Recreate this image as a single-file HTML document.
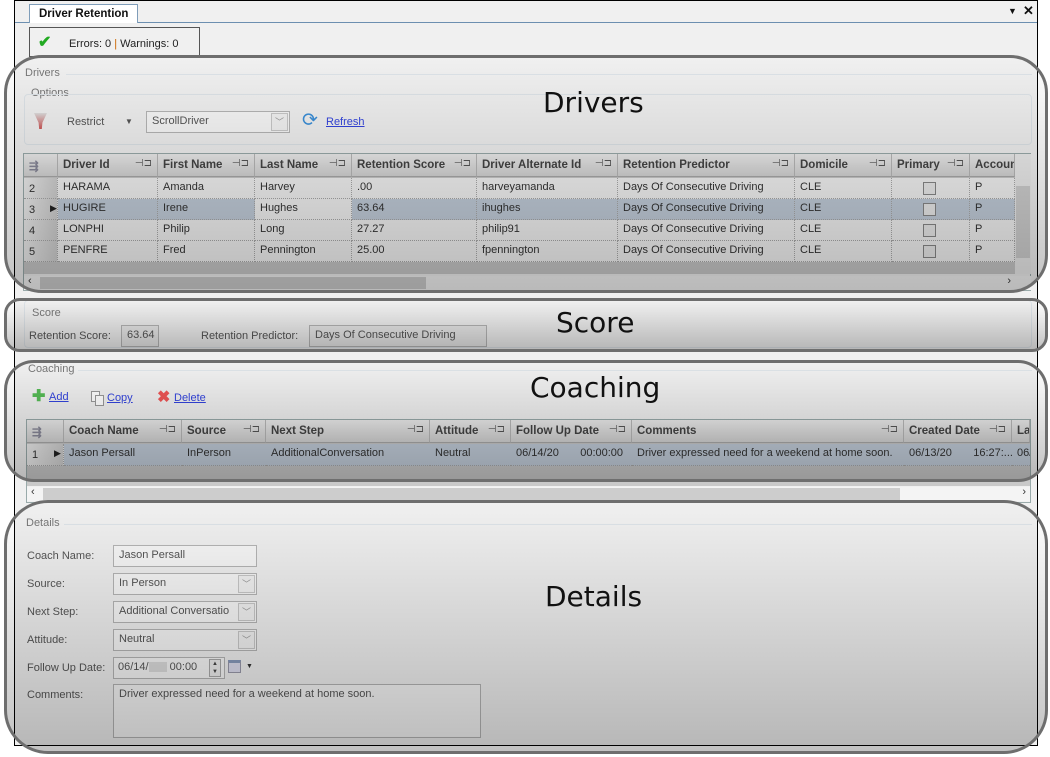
<!DOCTYPE html>
<html><head><meta charset="utf-8"><style>
*{box-sizing:border-box;margin:0;padding:0}
body{width:1050px;height:757px;background:#fff;position:relative;overflow:hidden;font-family:"Liberation Sans",Tahoma,sans-serif;font-size:11px;color:#333}
.a{position:absolute}
#win{left:14px;top:0;width:1024px;height:746px;border:1px solid #000;background:#f0f0f0}
.lbl{color:#777;font-size:11px}
.line{height:1px;background:#dde3e8}
.grid{border:1px solid #9aa;background:#c8c8c8}
.hd{position:absolute;top:0;height:23px;background:linear-gradient(#ececec,#d4d4d4);border-right:1px solid #b8b8b8;border-bottom:1px solid #aaa;font-weight:bold;color:#444;font-size:11.5px;padding:5px 0 0 5px;white-space:nowrap;overflow:hidden}
.pin{position:absolute;right:5px;top:4px;font-weight:normal;color:#555;font-size:10px}
.c{position:absolute;height:21px;padding:3px 0 0 5px;border-right:1px dotted #aaa;border-bottom:1px dotted #aaa;white-space:nowrap;overflow:hidden;color:#333}
.ov{position:absolute;border:3px solid #6e6e6e;border-radius:38px;background:linear-gradient(rgba(0,0,0,0),rgba(0,0,0,.24))}
.big{position:absolute;font-family:"DejaVu Sans",sans-serif;font-size:28px;color:#111}
.box{position:absolute;border:1px solid #b5b5b5;background:#f7f7f7;padding:3px 5px;color:#555;white-space:nowrap;overflow:hidden}
.dd{position:absolute;right:1px;top:1px;width:17px;height:18px;border:1px solid #c8c8c8;background:#f2f2f2;color:#999;font-size:9px;text-align:center;line-height:16px}
a{color:#3344dd;text-decoration:underline}
.chk{position:absolute;width:13px;height:13px;border:1px solid #888;background:#ececec}
</style></head><body>
<div id="win" class="a"></div>
<!-- tab -->
<div class="a" style="left:15px;top:22px;width:1022px;height:1px;background:#6c8fb0"></div>
<div class="a" style="left:29px;top:4px;width:109px;height:19px;border:1px solid #7f9db9;border-bottom:none;background:#fff;font-weight:bold;font-size:11.5px;color:#111;padding:3px 0 0 9px">Driver Retention</div>
<div class="a" style="left:1008px;top:6px;font-size:9px;color:#111">▼</div>
<div class="a" style="left:1023px;top:3px;font-weight:bold;font-size:13px;color:#111">✕</div>
<!-- errors -->
<div class="a" style="left:29px;top:27px;width:171px;height:30px;border:1px solid #555;background:#f0f0f0"></div>
<div class="a" style="left:38px;top:32px;color:#2a2;font-size:16px;font-weight:bold">✔</div>
<div class="a" style="left:69px;top:38px;color:#222">Errors: 0 <span style="color:#c60">|</span> Warnings: 0</div>

<!-- Drivers -->
<div class="a lbl" style="left:25px;top:67px">Drivers</div>
<div class="a line" style="left:66px;top:74px;width:966px"></div>
<div class="a lbl" style="left:31px;top:87px">Options</div>
<div class="a" style="left:24px;top:94px;width:1008px;height:51px;border:1px solid #dde3e8;border-radius:4px"></div>
<div class="a" style="left:34px;top:113px;width:13px;height:16px;background:linear-gradient(#ddd,#c55);clip-path:polygon(0 0,100% 0,65% 60%,60% 100%,40% 100%,35% 60%)"></div>
<div class="a" style="left:67px;top:116px;color:#555">Restrict</div>
<div class="a" style="left:125px;top:117px;font-size:8px;color:#555">▼</div>
<div class="box" style="left:146px;top:111px;width:144px;height:22px">ScrollDriver<div class="dd">﹀</div></div>
<div class="a" style="left:302px;top:111px;color:#3b8fd8;font-size:19px;line-height:20px">⟳</div>
<a class="a" style="left:326px;top:116px">Refresh</a>

<div class="a grid" style="left:23px;top:153px;width:1008px;height:138px;background:#f0f0f0"></div>
<div class="a" style="left:24px;top:154px;width:991px;height:120px;background:#c9c9c9"></div>
<div class="hd" style="left:24px;top:154px;width:34px"><span style="color:#889">⇶</span></div>
<div class="hd" style="left:58px;top:154px;width:100px">Driver Id<span class="pin">⊣⊐</span></div>
<div class="hd" style="left:158px;top:154px;width:97px">First Name<span class="pin">⊣⊐</span></div>
<div class="hd" style="left:255px;top:154px;width:97px">Last Name<span class="pin">⊣⊐</span></div>
<div class="hd" style="left:352px;top:154px;width:125px">Retention Score<span class="pin">⊣⊐</span></div>
<div class="hd" style="left:477px;top:154px;width:141px">Driver Alternate Id<span class="pin">⊣⊐</span></div>
<div class="hd" style="left:618px;top:154px;width:177px">Retention Predictor<span class="pin">⊣⊐</span></div>
<div class="hd" style="left:795px;top:154px;width:97px">Domicile<span class="pin">⊣⊐</span></div>
<div class="hd" style="left:892px;top:154px;width:78px">Primary<span class="pin">⊣⊐</span></div>
<div class="hd" style="left:970px;top:154px;width:45px">Accoun</div>
<div class="a" style="left:1015px;top:154px;width:16px;height:120px;background:#ececec"><div style="position:absolute;top:32px;left:1px;width:14px;height:72px;background:#d0d0d0"></div></div>
<div class="a" style="left:24px;top:276px;width:1007px;height:14px;background:#f4f4f4"><div style="position:absolute;left:16px;top:1px;width:386px;height:12px;background:#cdcdcd"></div><span style="position:absolute;left:4px;top:-1px;color:#333">‹</span><span style="position:absolute;right:20px;top:-1px;color:#333">›</span></div>

<!-- Score -->
<div class="a" style="left:24px;top:300px;width:1008px;height:48px;border:1px solid #dde3e8;border-radius:4px"></div>
<div class="a lbl" style="left:32px;top:307px">Score</div>
<div class="a" style="left:29px;top:330px;color:#555">Retention Score:</div>
<div class="box" style="left:121px;top:325px;width:38px;height:22px;background:#e9e9e9">63.64</div>
<div class="a" style="left:201px;top:330px;color:#555">Retention Predictor:</div>
<div class="box" style="left:309px;top:325px;width:178px;height:22px;background:#e9e9e9">Days Of Consecutive Driving</div>

<!-- Coaching -->
<div class="a lbl" style="left:28px;top:363px">Coaching</div>
<div class="a line" style="left:78px;top:370px;width:954px"></div>
<div class="a" style="left:32px;top:389px;color:#5b5;font-size:16px;font-weight:bold;line-height:16px">✚</div>
<a class="a" style="left:49px;top:391px">Add</a>
<div class="a" style="left:91px;top:391px;width:9px;height:11px;border:1px solid #999;background:#fff"></div>
<div class="a" style="left:95px;top:395px;width:9px;height:11px;border:1px solid #999;background:#fff"></div>
<a class="a" style="left:107px;top:392px">Copy</a>
<div class="a" style="left:157px;top:387px;color:#e55;font-size:16px;font-weight:bold">✖</div>
<a class="a" style="left:174px;top:392px">Delete</a>
<div class="a grid" style="left:26px;top:419px;width:1005px;height:84px;background:#f0f0f0"></div>
<div class="a" style="left:27px;top:420px;width:1003px;height:66px;background:#c9c9c9"></div>
<div class="hd" style="left:27px;top:420px;width:37px"><span style="color:#889">⇶</span></div>
<div class="hd" style="left:64px;top:420px;width:118px">Coach Name<span class="pin">⊣⊐</span></div>
<div class="hd" style="left:182px;top:420px;width:84px">Source<span class="pin">⊣⊐</span></div>
<div class="hd" style="left:266px;top:420px;width:164px">Next Step<span class="pin">⊣⊐</span></div>
<div class="hd" style="left:430px;top:420px;width:81px">Attitude<span class="pin">⊣⊐</span></div>
<div class="hd" style="left:511px;top:420px;width:121px">Follow Up Date<span class="pin">⊣⊐</span></div>
<div class="hd" style="left:632px;top:420px;width:272px">Comments<span class="pin">⊣⊐</span></div>
<div class="hd" style="left:904px;top:420px;width:108px">Created Date<span class="pin">⊣⊐</span></div>
<div class="hd" style="left:1012px;top:420px;width:18px">La</div>
<div class="a" style="left:27px;top:487px;width:1003px;height:14px;background:#f4f4f4"><div style="position:absolute;left:16px;top:1px;width:857px;height:12px;background:#cdcdcd"></div><span style="position:absolute;left:4px;top:-1px">‹</span><span style="position:absolute;right:4px;top:-1px">›</span></div>

<div id="rows"></div>
<script>
var cols=[58,158,255,352,477,618,795,892,970,1015];
var data=[["2","HARAMA","Amanda","Harvey",".00","harveyamanda"],["3","HUGIRE","Irene","Hughes","63.64","ihughes"],["4","LONPHI","Philip","Long","27.27","philip91"],["5","PENFRE","Fred","Pennington","25.00","fpennington"]];
var h="";
data.forEach(function(r,i){var y=178+i*21;var sel=i==1;var bg=sel?"#c3cedb":"#f4f4f4";
h+='<div class="c" style="left:24px;top:'+y+'px;width:34px;background:linear-gradient(90deg,#eee,#cfcfcf);padding-top:5px">'+r[0]+(sel?'<span style="position:absolute;left:26px;top:4px;font-size:9px;color:#222">▶</span>':'')+'</div>';
var vals=[r[1],r[2],r[3],r[4],r[5],"Days Of Consecutive Driving","CLE","","P"];
for(var k=0;k<9;k++){var b=bg;if(sel&&k==2)b="#f4f4f4";
h+='<div class="c" style="left:'+cols[k]+'px;top:'+y+'px;width:'+(cols[k+1]-cols[k])+'px;background:'+b+'">'+vals[k]+(k==7?'<span class="chk" style="left:31px;top:4px"></span>':'')+'</div>';}
});
var cc=[64,182,266,430,511,632,904,1012,1030];
var cv=["Jason Persall","InPerson","AdditionalConversation","Neutral","06/14/20&nbsp;&nbsp;&nbsp;&nbsp;&nbsp;&nbsp; 00:00:00","Driver expressed need for a weekend at home soon.","06/13/20&nbsp;&nbsp;&nbsp;&nbsp;&nbsp;&nbsp; 16:27:...","06/"];
h+='<div class="c" style="left:27px;top:444px;width:37px;height:22px;background:linear-gradient(90deg,#eee,#cfcfcf);padding-top:5px">1<span style="position:absolute;left:27px;top:4px;font-size:9px;color:#222">▶</span></div>';
for(var k=0;k<8;k++)h+='<div class="c" style="left:'+cc[k]+'px;top:444px;height:22px;width:'+(cc[k+1]-cc[k])+'px;background:#c3cedb;border-right:none">'+cv[k]+'</div>';
document.getElementById("rows").innerHTML=h;
</script>

<!-- Details -->
<div class="a lbl" style="left:26px;top:517px">Details</div>
<div class="a line" style="left:64px;top:524px;width:968px"></div>
<div class="a" style="left:27px;top:550px;color:#555">Coach Name:</div>
<div class="box" style="left:113px;top:545px;width:144px;height:22px">Jason Persall</div>
<div class="a" style="left:27px;top:578px;color:#555">Source:</div>
<div class="box" style="left:113px;top:573px;width:144px;height:22px">In Person<div class="dd">﹀</div></div>
<div class="a" style="left:27px;top:606px;color:#555">Next Step:</div>
<div class="box" style="left:113px;top:601px;width:144px;height:22px">Additional Conversatio<div class="dd">﹀</div></div>
<div class="a" style="left:27px;top:634px;color:#555">Attitude:</div>
<div class="box" style="left:113px;top:629px;width:144px;height:22px">Neutral<div class="dd">﹀</div></div>
<div class="a" style="left:27px;top:662px;color:#555">Follow Up Date:</div>
<div class="box" style="left:113px;top:657px;width:112px;height:22px;padding-left:4px">06/14/<span style="display:inline-block;width:18px;height:10px;background:#ddd;vertical-align:middle"></span> 00:00</div>
<div class="a" style="left:209px;top:659px;width:12px;height:18px;border:1px solid #aaa;background:#eee;font-size:6px;line-height:8px;text-align:center;color:#444">▲<br>▼</div>
<div class="a" style="left:228px;top:660px;width:13px;height:13px;border:1px solid #99a;background:#dde;border-top:3px solid #8899bb"></div>
<div class="a" style="left:246px;top:663px;font-size:7px">▼</div>
<div class="a" style="left:27px;top:689px;color:#555">Comments:</div>
<div class="box" style="left:113px;top:684px;width:368px;height:54px">Driver expressed need for a weekend at home soon.</div>

<!-- overlays -->
<div class="ov" style="left:4px;top:55px;width:1044px;height:238px"></div>
<div class="big" style="left:543px;top:86px">Drivers</div>
<div class="ov" style="left:4px;top:298px;width:1044px;height:54px;border-radius:16px"></div>
<div class="big" style="left:556px;top:306px">Score</div>
<div class="ov" style="left:4px;top:360px;width:1044px;height:122px;border-radius:30px"></div>
<div class="big" style="left:530px;top:371px">Coaching</div>
<div class="ov" style="left:4px;top:500px;width:1044px;height:254px;border-radius:44px"></div>
<div class="big" style="left:545px;top:580px">Details</div>
</body></html>
